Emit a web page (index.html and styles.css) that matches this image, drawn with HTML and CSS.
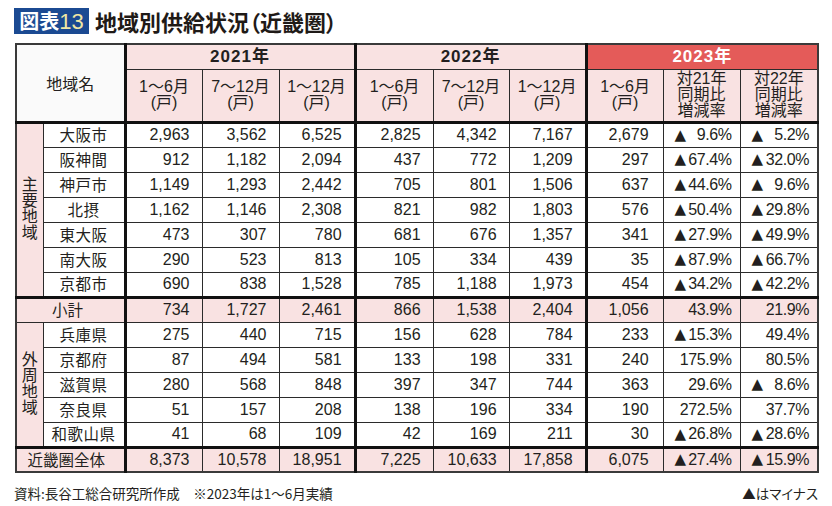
FILE: index.html
```html
<!DOCTYPE html>
<html lang="ja">
<head>
<meta charset="utf-8">
<link rel="stylesheet" href="styles.css">
</head>
<body>
<div class="page">
  <div class="title-row">
    <div class="fig-label">図表<span class="fig-num">13</span></div>
    <h1 class="title">地域別供給状況（近畿圏）</h1>
  </div>
  <table class="supply">
    <colgroup>
      <col class="c-grp"><col class="c-name">
      <col class="c-num"><col class="c-num"><col class="c-num2">
      <col class="c-num3"><col class="c-num2"><col class="c-num">
      <col class="c-num"><col class="c-num"><col class="c-num3">
    </colgroup>
    <thead>
      <tr class="h-year">
        <th class="h-area" colspan="2" rowspan="2">地域名</th>
        <th class="yr tl" colspan="3">2021年</th>
        <th class="yr tl" colspan="3">2022年</th>
        <th class="yr yr-hot tl" colspan="3">2023年</th>
      </tr>
      <tr class="h-sub">
        <th class="tl">1〜6月<br>(戸)</th>
        <th>7〜12月<br>(戸)</th>
        <th>1〜12月<br>(戸)</th>
        <th class="tl">1〜6月<br>(戸)</th>
        <th>7〜12月<br>(戸)</th>
        <th>1〜12月<br>(戸)</th>
        <th class="tl">1〜6月<br>(戸)</th>
        <th>対21年<br>同期比<br>増減率</th>
        <th>対22年<br>同期比<br>増減率</th>
      </tr>
    </thead>
    <tbody>
      <tr>
        <th class="grp" rowspan="7"><span class="vtext">主要地域</span></th>
        <th class="name">大阪市</th>
        <td class="tl">2,963</td><td>3,562</td><td>6,525</td>
        <td class="tl">2,825</td><td>4,342</td><td>7,167</td>
        <td class="tl n7">2,679</td>
        <td class="pct"><div class="pv"><span class="tri">▲</span><span>9.6%</span></div></td>
        <td class="pct"><div class="pv"><span class="tri">▲</span><span>5.2%</span></div></td>
      </tr>
      <tr>
        <th class="name">阪神間</th>
        <td class="tl">912</td><td>1,182</td><td>2,094</td>
        <td class="tl">437</td><td>772</td><td>1,209</td>
        <td class="tl n7">297</td>
        <td class="pct"><div class="pv"><span class="tri">▲</span><span>67.4%</span></div></td>
        <td class="pct"><div class="pv"><span class="tri">▲</span><span>32.0%</span></div></td>
      </tr>
      <tr>
        <th class="name">神戸市</th>
        <td class="tl">1,149</td><td>1,293</td><td>2,442</td>
        <td class="tl">705</td><td>801</td><td>1,506</td>
        <td class="tl n7">637</td>
        <td class="pct"><div class="pv"><span class="tri">▲</span><span>44.6%</span></div></td>
        <td class="pct"><div class="pv"><span class="tri">▲</span><span>9.6%</span></div></td>
      </tr>
      <tr>
        <th class="name">北摂</th>
        <td class="tl">1,162</td><td>1,146</td><td>2,308</td>
        <td class="tl">821</td><td>982</td><td>1,803</td>
        <td class="tl n7">576</td>
        <td class="pct"><div class="pv"><span class="tri">▲</span><span>50.4%</span></div></td>
        <td class="pct"><div class="pv"><span class="tri">▲</span><span>29.8%</span></div></td>
      </tr>
      <tr>
        <th class="name">東大阪</th>
        <td class="tl">473</td><td>307</td><td>780</td>
        <td class="tl">681</td><td>676</td><td>1,357</td>
        <td class="tl n7">341</td>
        <td class="pct"><div class="pv"><span class="tri">▲</span><span>27.9%</span></div></td>
        <td class="pct"><div class="pv"><span class="tri">▲</span><span>49.9%</span></div></td>
      </tr>
      <tr>
        <th class="name">南大阪</th>
        <td class="tl">290</td><td>523</td><td>813</td>
        <td class="tl">105</td><td>334</td><td>439</td>
        <td class="tl n7">35</td>
        <td class="pct"><div class="pv"><span class="tri">▲</span><span>87.9%</span></div></td>
        <td class="pct"><div class="pv"><span class="tri">▲</span><span>66.7%</span></div></td>
      </tr>
      <tr>
        <th class="name">京都市</th>
        <td class="tl">690</td><td>838</td><td>1,528</td>
        <td class="tl">785</td><td>1,188</td><td>1,973</td>
        <td class="tl n7">454</td>
        <td class="pct"><div class="pv"><span class="tri">▲</span><span>34.2%</span></div></td>
        <td class="pct"><div class="pv"><span class="tri">▲</span><span>42.2%</span></div></td>
      </tr>
      <tr class="sub tt">
        <th class="subname" colspan="2">小計</th>
        <td class="tl">734</td><td>1,727</td><td>2,461</td>
        <td class="tl">866</td><td>1,538</td><td>2,404</td>
        <td class="tl n7">1,056</td>
        <td class="pct"><div class="pv"><span></span><span>43.9%</span></div></td>
        <td class="pct"><div class="pv"><span></span><span>21.9%</span></div></td>
      </tr>
      <tr>
        <th class="grp" rowspan="5"><span class="vtext">外周地域</span></th>
        <th class="name">兵庫県</th>
        <td class="tl">275</td><td>440</td><td>715</td>
        <td class="tl">156</td><td>628</td><td>784</td>
        <td class="tl n7">233</td>
        <td class="pct"><div class="pv"><span class="tri">▲</span><span>15.3%</span></div></td>
        <td class="pct"><div class="pv"><span></span><span>49.4%</span></div></td>
      </tr>
      <tr>
        <th class="name">京都府</th>
        <td class="tl">87</td><td>494</td><td>581</td>
        <td class="tl">133</td><td>198</td><td>331</td>
        <td class="tl n7">240</td>
        <td class="pct"><div class="pv"><span></span><span>175.9%</span></div></td>
        <td class="pct"><div class="pv"><span></span><span>80.5%</span></div></td>
      </tr>
      <tr>
        <th class="name">滋賀県</th>
        <td class="tl">280</td><td>568</td><td>848</td>
        <td class="tl">397</td><td>347</td><td>744</td>
        <td class="tl n7">363</td>
        <td class="pct"><div class="pv"><span></span><span>29.6%</span></div></td>
        <td class="pct"><div class="pv"><span class="tri">▲</span><span>8.6%</span></div></td>
      </tr>
      <tr>
        <th class="name">奈良県</th>
        <td class="tl">51</td><td>157</td><td>208</td>
        <td class="tl">138</td><td>196</td><td>334</td>
        <td class="tl n7">190</td>
        <td class="pct"><div class="pv"><span></span><span>272.5%</span></div></td>
        <td class="pct"><div class="pv"><span></span><span>37.7%</span></div></td>
      </tr>
      <tr>
        <th class="name">和歌山県</th>
        <td class="tl">41</td><td>68</td><td>109</td>
        <td class="tl">42</td><td>169</td><td>211</td>
        <td class="tl n7">30</td>
        <td class="pct"><div class="pv"><span class="tri">▲</span><span>26.8%</span></div></td>
        <td class="pct"><div class="pv"><span class="tri">▲</span><span>28.6%</span></div></td>
      </tr>
      <tr class="sub tt total">
        <th class="totalname" colspan="2">近畿圏全体</th>
        <td class="tl">8,373</td><td>10,578</td><td>18,951</td>
        <td class="tl">7,225</td><td>10,633</td><td>17,858</td>
        <td class="tl n7">6,075</td>
        <td class="pct"><div class="pv"><span class="tri">▲</span><span>27.4%</span></div></td>
        <td class="pct"><div class="pv"><span class="tri">▲</span><span>15.9%</span></div></td>
      </tr>
    </tbody>
  </table>
  <div class="footer">
    <span>資料:長谷工総合研究所作成　※2023年は1〜6月実績</span>
    <span>▲はマイナス</span>
  </div>
</div>
</body>
</html>
```

FILE: styles.css
```css
* { box-sizing: border-box; }
html, body { margin: 0; padding: 0; background: #ffffff; }
body {
  font-family: "Liberation Sans", "Noto Sans CJK JP", sans-serif;
  color: #231f20;
}
.page {
  width: 832px;
  height: 506px;
  padding: 8px 14px 0 14px;
}
.title-row {
  display: flex;
  align-items: center;
  gap: 6px;
  height: 26px;
}
.fig-label {
  width: 75px;
  height: 26px;
  background: #1b4a92;
  color: #ffffff;
  font-family: "Noto Sans CJK JP", sans-serif;
  font-weight: 700;
  font-size: 20px;
  line-height: 26px;
  text-align: center;
}
.fig-num {
  font-family: "Liberation Sans", sans-serif;
  font-weight: 400;
  font-size: 22px;
  color: #f1e7a4;
}
.title {
  margin: 0;
  font-family: "Noto Sans CJK JP", sans-serif;
  font-weight: 700;
  font-size: 22px;
  line-height: 26px;
  font-feature-settings: "palt";
  color: #1f1a17;
}
.supply {
  margin-top: 9px;
  margin-left: 1px;
  border-collapse: collapse;
  table-layout: fixed;
  width: 802px;
  border: 2px solid #3a3a3a;
}
.c-grp { width: 27px; }
.c-name { width: 82px; }
.c-num { width: 77px; }
.c-num2 { width: 76px; }
.c-num3 { width: 78px; }
.supply th, .supply td {
  border: 1px solid #2b2b2b;
  padding: 0;
  height: 25px;
  font-weight: 400;
  line-height: 1;
}
.supply td {
  font-size: 16px;
  text-align: right;
  padding-right: 12px;
  background: #ffffff;
}
.supply td.n7 { padding-right: 14px; }
.supply .tl { border-left: 3px solid #111111; }
.h-year th { height: 25px; }
.h-sub th {
  height: 53px;
  font-size: 16px;
  line-height: 16px;
  background: #f9e2e2;
  border-bottom: 3px solid #111111;
}
.h-area {
  background: #fafafa;
  font-size: 16px;
  font-family: "Noto Sans CJK JP", sans-serif;
  border-bottom: 3px solid #111111 !important;
}
.yr {
  background: #f9e2e2;
  font-weight: 700 !important;
  font-size: 17px;
  letter-spacing: 1px;
}
.yr-hot {
  background: #e45b59;
  color: #ffffff;
}
.grp {
  background: #f9e2e2;
  vertical-align: middle;
}
.vtext {
  display: inline-block;
  writing-mode: vertical-rl;
  text-orientation: upright;
  font-family: "Noto Sans CJK JP", sans-serif;
  font-size: 16px;
  line-height: 1;
}
.name {
  background: #ffffff;
  font-family: "Noto Sans CJK JP", sans-serif;
  font-size: 15.5px;
  letter-spacing: 0.5px;
  text-align: center;
}
.sub th, .sub td { background: #f9e2e2; }
.tt th, .tt td { border-top: 3px solid #111111; }
.subname {
  font-family: "Noto Sans CJK JP", sans-serif;
  font-size: 15.5px;
  text-align: left;
  padding-left: 35px !important;
}
.totalname {
  font-family: "Noto Sans CJK JP", sans-serif;
  font-size: 15.5px;
  text-align: center;
  padding-right: 8px !important;
}
.supply td.pct {
  padding: 0 8px 0 11px;
}
.pv {
  display: flex;
  justify-content: space-between;
  align-items: center;
  letter-spacing: -0.4px;
}
.tri {
  font-family: "DejaVu Sans", sans-serif;
  font-size: 15px;
  letter-spacing: 0;
}
.footer {
  margin-top: 10px;
  width: 804px;
  display: flex;
  justify-content: space-between;
  font-family: "Noto Sans CJK JP", sans-serif;
  font-size: 13.5px;
  line-height: 20px;
  font-feature-settings: "palt";
}
```
